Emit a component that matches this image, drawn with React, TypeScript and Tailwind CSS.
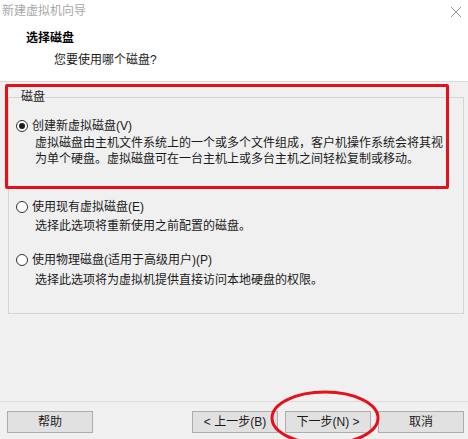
import React from "react";

function Radio({ checked }: { checked?: boolean }) {
    return (
        <span className="w-[12px] h-[12px] rounded-full border border-[#333333] bg-white flex items-center justify-center shrink-0">
            {checked && <span className="w-[6px] h-[6px] rounded-full bg-[#1a1a1a]" />}
        </span>
    );
}

function WinButton({ label }: { label: string }) {
    return (
        <button className="w-[86px] h-[22px] bg-[#e1e1e1] border border-[#adadad] text-[12px] leading-[20px] text-[#1a1a1a]">
            {label}
        </button>
    );
}

export default function App() {
    return (
        <div className="relative w-[468px] h-[439px] overflow-hidden bg-[#f0f0f0] flex flex-col text-[12px] text-[#1a1a1a] font-['Liberation_Sans','Noto_Sans_CJK_SC',sans-serif]">
            {/* header */}
            <div className="h-[82px] bg-white border-b border-[#d9d9d9] shrink-0">
                <div className="flex justify-between items-start pt-[3px] pl-[2px] pr-[6px]">
                    <span className="leading-[16px] text-[#a8a8a8]">新建虚拟机向导</span>
                    <svg width="12" height="12" viewBox="0 0 12 12" className="mt-[3px]">
                        <path d="M1 1 L11 11 M11 1 L1 11" stroke="#9a9a9a" strokeWidth="1" />
                    </svg>
                </div>
                <div className="mt-[11px] pl-[26px] leading-[16px] font-bold text-black">选择磁盘</div>
                <div className="mt-[6px] pl-[54px] leading-[16px]">您要使用哪个磁盘?</div>
            </div>

            {/* group box */}
            <fieldset className="mt-[7px] ml-[8px] mr-[4px] h-[225px] border border-[#d5d5d5] pl-[7px]">
                <legend className="ml-[5px] leading-[16px]">磁盘</legend>

                <div className="mt-[13px] flex items-center gap-[4px] leading-[16px]">
                    <Radio checked />
                    <span>创建新虚拟磁盘(V)</span>
                </div>
                <div className="mt-[1px] pl-[19px] leading-[16px]">
                    <div>虚拟磁盘由主机文件系统上的一个或多个文件组成，客户机操作系统会将其视</div>
                    <div>为单个硬盘。虚拟磁盘可在一台主机上或多台主机之间轻松复制或移动。</div>
                </div>

                <div className="mt-[32px] flex items-center gap-[4px] leading-[16px]">
                    <Radio />
                    <span>使用现有虚拟磁盘(E)</span>
                </div>
                <div className="mt-[3px] pl-[19px] leading-[16px]">选择此选项将重新使用之前配置的磁盘。</div>

                <div className="mt-[18px] flex items-center gap-[4px] leading-[16px]">
                    <Radio />
                    <span>使用物理磁盘(适用于高级用户)(P)</span>
                </div>
                <div className="mt-[4px] pl-[19px] leading-[16px]">选择此选项将为虚拟机提供直接访问本地硬盘的权限。</div>
            </fieldset>

            {/* footer */}
            <div className="mt-auto h-[38px] border-t border-[#dcdcdc] pt-[9px] pl-[7px] pr-[4px] flex">
                <WinButton label="帮助" />
                <div className="ml-auto flex gap-[7px]">
                    <WinButton label="< 上一步(B)" />
                    <WinButton label="下一步(N) >" />
                    <WinButton label="取消" />
                </div>
            </div>

            {/* annotation overlays */}
            <div className="absolute left-[5px] top-[84px] w-[444px] h-[105px] border-[3px] border-[#e5101c] rounded-[2px]" />
            <svg className="absolute left-[268px] top-[388px]" width="114" height="60" viewBox="0 0 114 60">
                <ellipse cx="57" cy="30" rx="53" ry="26" fill="none" stroke="#e5101c" strokeWidth="3" />
            </svg>
        </div>
    );
}
